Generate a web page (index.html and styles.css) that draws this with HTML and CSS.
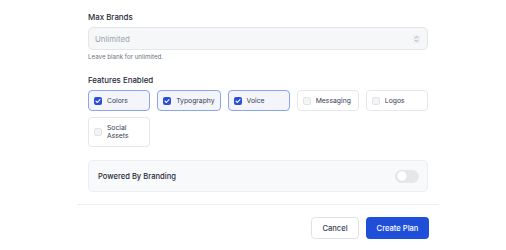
FILE: index.html
```html
<!DOCTYPE html>
<html lang="en">
<head>
  <meta charset="UTF-8">
  <meta name="viewport" content="width=device-width, initial-scale=1.0">
  <title>Create Plan</title>
  <link rel="stylesheet" href="styles.css">
</head>
<body>
  <div class="modal">
    <div class="modal-body">
      <label class="field-label">Max Brands</label>
      <div class="number-input">
        <span class="placeholder">Unlimited</span>
        <span class="spinner">
          <svg width="7" height="8" viewBox="0 0 7 8">
            <path d="M2 3 L3.5 1.6 L5 3" fill="none" stroke="#9ca3af" stroke-width="0.8"/>
            <path d="M2 5 L3.5 6.4 L5 5" fill="none" stroke="#9ca3af" stroke-width="0.8"/>
          </svg>
        </span>
      </div>
      <p class="help">Leave blank for unlimited.</p>

      <label class="field-label features-label">Features Enabled</label>
      <div class="features">
        <div class="feature checked"><span class="box"><svg width="8" height="8" viewBox="0 0 8 8"><path d="M2 4.2 L3.4 5.5 L6 2.6" fill="none" stroke="#fff" stroke-width="1.1" stroke-linecap="round" stroke-linejoin="round"/></svg></span><span>Colors</span></div>
        <div class="feature checked"><span class="box"><svg width="8" height="8" viewBox="0 0 8 8"><path d="M2 4.2 L3.4 5.5 L6 2.6" fill="none" stroke="#fff" stroke-width="1.1" stroke-linecap="round" stroke-linejoin="round"/></svg></span><span>Typography</span></div>
        <div class="feature checked"><span class="box"><svg width="8" height="8" viewBox="0 0 8 8"><path d="M2 4.2 L3.4 5.5 L6 2.6" fill="none" stroke="#fff" stroke-width="1.1" stroke-linecap="round" stroke-linejoin="round"/></svg></span><span>Voice</span></div>
        <div class="feature"><span class="box"></span><span>Messaging</span></div>
        <div class="feature"><span class="box"></span><span>Logos</span></div>
        <div class="feature"><span class="box"></span><span>Social<br>Assets</span></div>
      </div>

      <div class="toggle-row">
        <span>Powered By Branding</span>
        <span class="toggle"><span class="knob"></span></span>
      </div>
    </div>

    <div class="modal-footer">
      <button class="btn btn-cancel">Cancel</button>
      <button class="btn btn-primary">Create Plan</button>
    </div>
  </div>
</body>
</html>
```

FILE: styles.css
```css
body {
  margin: 0;
  background: #fff;
  font-family: Inter, 'Noto Sans', sans-serif;
  color: #1f2937;
}

.modal {
  width: 362px;
  margin-left: 77px;
}

.modal-body {
  padding: 11px 11px 12px;
}

.field-label {
  display: block;
  font-size: 7.9px;
  font-weight: 500;
  line-height: 12px;
  color: #1f2937;
}

.number-input {
  margin-top: 4px;
  height: 23px;
  box-sizing: border-box;
  border: 1px solid #e2e5ea;
  border-radius: 5px;
  background: #f6f7f9;
  display: flex;
  align-items: center;
  justify-content: space-between;
  padding: 0 7px 0 6px;
}

.placeholder {
  font-size: 7.8px;
  color: #9ca3af;
}

.spinner {
  width: 7px;
  height: 8px;
  background: #eceef1;
  border-radius: 1px;
  display: flex;
}

.help {
  margin: 3px 0 0;
  font-size: 6.2px;
  line-height: 8px;
  color: #6b7280;
}

.features-label {
  margin-top: 13px;
}

.features {
  margin-top: 4px;
  display: grid;
  grid-template-columns: repeat(5, 1fr);
  gap: 6px 7px;
}

.feature {
  display: flex;
  align-items: center;
  gap: 5px;
  padding: 5.5px 5px;
  border: 1px solid #e5e7eb;
  border-radius: 4px;
  background: #fff;
  font-size: 6.8px;
  line-height: 8.4px;
  color: #374151;
}

.feature.checked {
  border-color: #8aa4f0;
  background: #f3f5fa;
}

.box {
  flex: none;
  width: 8px;
  height: 8px;
  box-sizing: border-box;
  border: 1px solid #e0e2e6;
  border-radius: 2px;
  background: #f3f4f6;
  display: flex;
}

.checked .box {
  border: none;
  background: #2a4fd6;
}

.toggle-row {
  margin-top: 13px;
  height: 32px;
  box-sizing: border-box;
  border: 1px solid #eceef1;
  border-radius: 5px;
  background: #f8f9fb;
  display: flex;
  align-items: center;
  justify-content: space-between;
  padding: 0 8px 0 9px;
  font-size: 7.6px;
  font-weight: 500;
  color: #1f2937;
}

.toggle {
  width: 24px;
  height: 13px;
  border-radius: 7px;
  background: #e5e7eb;
  display: flex;
  align-items: center;
  padding: 0 1.5px;
  box-sizing: border-box;
}

.knob {
  width: 10px;
  height: 10px;
  border-radius: 50%;
  background: #fff;
  box-shadow: 0 0 1px rgba(0,0,0,0.2);
}

.modal-footer {
  border-top: 1px solid #eef0f3;
  padding: 12px 10px 0 0;
  display: flex;
  justify-content: flex-end;
  gap: 7px;
}

.btn {
  height: 22px;
  border-radius: 4px;
  font-family: inherit;
  font-size: 7.6px;
  font-weight: 500;
  cursor: pointer;
}

.btn-cancel {
  width: 48px;
  border: 1px solid #e0e2e6;
  background: #fff;
  color: #374151;
}

.btn-primary {
  width: 63px;
  border: none;
  background: #1f4fd8;
  color: #fff;
}
```
